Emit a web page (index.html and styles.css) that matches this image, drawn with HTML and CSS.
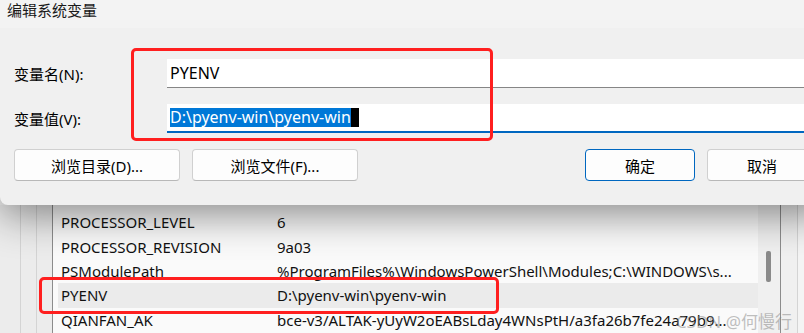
FILE: index.html
```html
<!DOCTYPE html>
<html lang="zh-CN">
<head>
    <meta charset="UTF-8">
    <title>编辑系统变量</title>
    <link rel="stylesheet" href="styles.css">
</head>
<body>
    <div class="dialog">
        <div class="titlebar">编辑系统变量</div>
        <div class="form">
            <div class="form-row">
                <label class="label">变量名(N):</label>
                <div class="input">PYENV</div>
            </div>
            <div class="form-row">
                <label class="label">变量值(V):</label>
                <div class="input focused"><span class="selected">D:\pyenv-win\pyenv-win</span><span class="caret"></span></div>
            </div>
            <div class="buttons">
                <button class="btn wide">浏览目录(D)...</button>
                <button class="btn wide">浏览文件(F)...</button>
                <span class="spacer"></span>
                <button class="btn primary">确定</button>
                <button class="btn">取消</button>
            </div>
        </div>
        <div class="mark mark-form"></div>
    </div>

    <div class="behind">
        <div class="gutter">
            <span class="line light"></span>
            <span class="line light"></span>
            <span class="line dark"></span>
        </div>
        <div class="list">
            <div class="row"><span class="name">PROCESSOR_LEVEL</span><span class="value">6</span></div>
            <div class="row"><span class="name">PROCESSOR_REVISION</span><span class="value">9a03</span></div>
            <div class="row"><span class="name">PSModulePath</span><span class="value">%ProgramFiles%\WindowsPowerShell\Modules;C:\WINDOWS\s...</span></div>
            <div class="row active"><span class="name">PYENV</span><span class="value">D:\pyenv-win\pyenv-win</span></div>
            <div class="row"><span class="name">QIANFAN_AK</span><span class="value">bce-v3/ALTAK-yUyW2oEABsLday4WNsPtH/a3fa26b7fe24a79b9...</span></div>
        </div>
        <div class="scrollbar"><span class="thumb"></span></div>
        <div class="edge"></div>
        <div class="mark mark-row"></div>
        <div class="watermark">CSDN @何慢行</div>
    </div>
</body>
</html>
```

FILE: styles.css
```css
body {
    margin: 0;
    width: 804px;
    height: 333px;
    overflow: hidden;
    font-family: "Noto Sans", "Noto Sans CJK SC", sans-serif;
    color: #000;
    background-color: #f4f4f4;
}
.dialog {
    position: relative;
    z-index: 2;
    width: 830px;
    height: 205px;
    background-color: #f0f0f0;
    border-bottom-left-radius: 8px;
    box-shadow: 0 10px 40px rgba(0, 0, 0, 0.45);
}
.titlebar {
    height: 28px;
    padding-left: 7px;
    font-size: 15px;
    line-height: 21px;
    background-color: #f3f3f3;
    color: #1a1a1a;
}
.form {
    padding: 31px 0 0 14px;
}
.form-row {
    display: flex;
    align-items: center;
    height: 29px;
    margin-bottom: 16px;
}
.label {
    width: 153px;
    font-size: 15px;
}
.input {
    flex: 1;
    height: 28px;
    padding-left: 3px;
    background-color: #fff;
    border-bottom: 1px solid #868686;
    font-size: 16px;
    line-height: 28px;
    display: flex;
    align-items: center;
}
.input.focused {
    height: 27px;
    border-bottom: 2px solid #0067c0;
}
.selected {
    background-color: #0078d7;
    color: #fff;
    line-height: 19px;
}
.caret {
    display: inline-block;
    width: 8px;
    height: 19px;
    background-color: #000;
}
.buttons {
    display: flex;
    gap: 12px;
    margin-top: 6px;
}
.spacer {
    width: 203px;
}
.btn {
    width: 110px;
    height: 32px;
    flex-shrink: 0;
    background-color: #fdfdfd;
    border: 1px solid #d0d0d0;
    border-bottom-color: #b8b8b8;
    border-radius: 4px;
    font-family: "Noto Sans", "Noto Sans CJK SC", sans-serif;
    font-size: 15px;
    color: #000;
    padding: 0;
}
.btn.wide {
    width: 166px;
}
.btn.primary {
    border-color: #0067c0;
}
.mark {
    position: absolute;
    border: 3px solid #ff1f1f;
    border-radius: 5px;
}
.mark-form {
    left: 131px;
    top: 48px;
    width: 356px;
    height: 87px;
}
.behind {
    position: relative;
    display: flex;
    height: 128px;
}
.gutter {
    display: flex;
    width: 53px;
    background-color: #ececec;
}
.line {
    width: 1px;
    margin-left: 15px;
}
.line:first-child {
    margin-left: 20px;
}
.line.light {
    background-color: #d4d4d4;
}
.line.dark {
    background-color: #8c8c8c;
}
.list {
    width: 700px;
    padding: 5px 0 0 5px;
    background-color: #fafafa;
}
.row {
    display: flex;
    height: 24.4px;
    align-items: center;
    font-size: 15px;
    color: #111;
}
.row.active {
    background-color: #ebebeb;
}
.name {
    width: 216px;
    padding-left: 3px;
    flex-shrink: 0;
}
.value {
    white-space: nowrap;
}
.scrollbar {
    position: relative;
    width: 22px;
    background-color: #f0f0f0;
    border-right: 1px solid #8c8c8c;
}
.thumb {
    position: absolute;
    left: 8px;
    top: 46px;
    width: 5px;
    height: 31px;
    border-radius: 2px;
    background-color: #8a8a8a;
}
.edge {
    width: 16px;
    border-right: 1px solid #d4d4d4;
    background-color: #f0f0f0;
}
.mark-row {
    left: 39px;
    top: 72px;
    width: 454px;
    height: 31px;
}
.watermark {
    position: absolute;
    right: 12px;
    top: 103px;
    font-size: 17px;
    color: rgba(130, 130, 130, 0.5);
}
```
